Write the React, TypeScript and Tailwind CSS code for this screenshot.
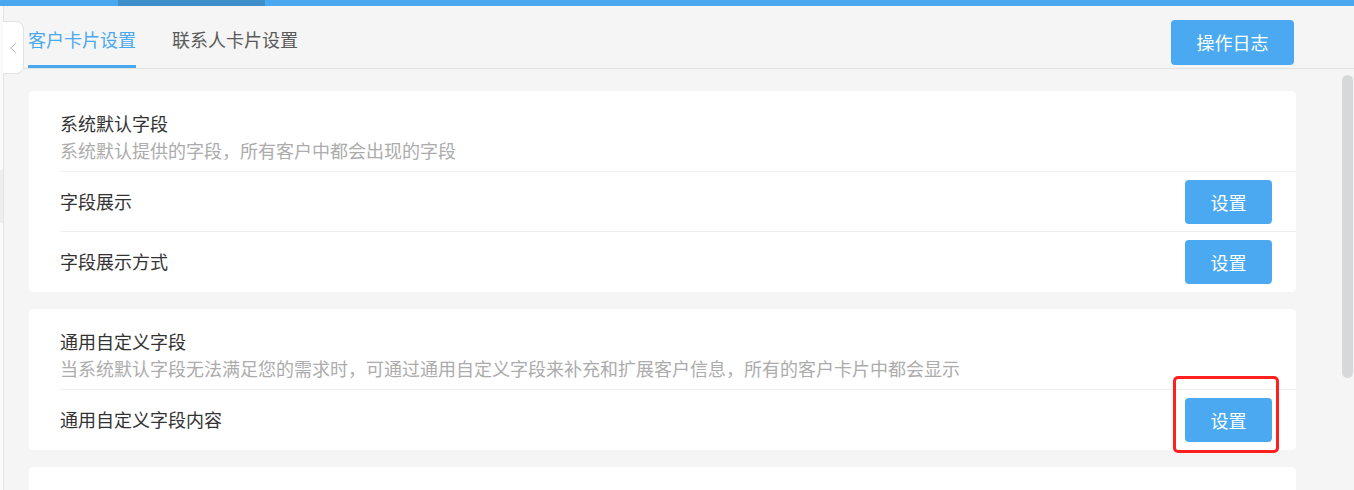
import { ChevronLeft } from "lucide-react";

const font = { fontFamily: '"Noto Sans CJK SC", "Noto Sans", sans-serif' };

function SetButton({ marked }: { marked?: boolean }) {
  return (
    <div className="relative">
      <button className="w-[87px] h-[44px] rounded-[4px] bg-[#4aa9f0] text-white text-[18px] leading-[44px]">
        设置
      </button>
      {marked && (
        <div className="absolute -left-[12px] -right-[7px] -top-[22px] -bottom-[11px] border-[3px] border-[#ff1f1f] rounded-[5px]" />
      )}
    </div>
  );
}

function Row({ label, marked }: { label: string; marked?: boolean }) {
  return (
    <div className="ml-[31px] h-[60px] border-t border-[#efefef] flex items-center justify-between pr-[24px]">
      <span className="text-[18px] text-[#333]">{label}</span>
      <SetButton marked={marked} />
    </div>
  );
}

function Card({
  title,
  desc,
  rows,
}: {
  title: string;
  desc: string;
  rows: { label: string; marked?: boolean }[];
}) {
  return (
    <div className="bg-white rounded-[4px] pb-[1px]">
      <div className="pl-[31px] pt-[19px] pb-[7px] text-[18px] leading-[27px]">
        <div className="text-[#333]">{title}</div>
        <div className="text-[#acacac]">{desc}</div>
      </div>
      {rows.map((r) => (
        <Row key={r.label} label={r.label} marked={r.marked} />
      ))}
    </div>
  );
}

export default function App() {
  return (
    <div className="w-[1354px] h-[490px] overflow-hidden bg-[#f5f5f5] relative" style={font}>
      <div className="h-[6px] bg-[#4aa8ee] flex">
        <div className="ml-[118px] w-[147px] bg-[#3f8fcb]" />
      </div>

      <div className="flex h-[484px]">
        <div className="w-[4px] border-r border-[#e3e3e3] bg-[#fafafa] flex flex-col">
          <div className="mt-[164px] h-[53px] bg-[#eeeeee]" />
        </div>

        <div className="flex-1 flex flex-col relative">
          <div className="h-[63px] border-b border-[#e2e2e2] flex justify-between pl-[24px] pr-[60px]">
            <div className="flex gap-[36px]">
              <div className="pt-[20px] pb-[12px] border-b-[3px] border-[#4aa8ee] text-[#4aa8ee] text-[18px] leading-[27px]">
                客户卡片设置
              </div>
              <div className="pt-[20px] pb-[12px] text-[#5a5a5a] text-[18px] leading-[27px]">
                联系人卡片设置
              </div>
            </div>
            <button className="mt-[14px] w-[123px] h-[45px] rounded-[4px] bg-[#4aa9f0] text-white text-[18px]">
              操作日志
            </button>
          </div>

          <div className="flex flex-col gap-[17px] pl-[25px] pr-[58px] pt-[22px]">
            <Card
              title="系统默认字段"
              desc="系统默认提供的字段，所有客户中都会出现的字段"
              rows={[{ label: "字段展示" }, { label: "字段展示方式" }]}
            />
            <Card
              title="通用自定义字段"
              desc="当系统默认字段无法满足您的需求时，可通过通用自定义字段来补充和扩展客户信息，所有的客户卡片中都会显示"
              rows={[{ label: "通用自定义字段内容", marked: true }]}
            />
            <div className="bg-white rounded-[4px] h-[80px]" />
          </div>

          <div className="absolute right-[1px] top-[69px] w-[11px] h-[303px] rounded-full bg-[#d7d8da]" />
        </div>
      </div>

      <div className="absolute left-[3px] top-[21px] w-[21px] h-[53px] bg-white border border-l-0 border-[#e3e3e3] rounded-r-[8px] flex items-center justify-center">
        <ChevronLeft size={18} strokeWidth={1.3} className="text-[#a5a5a5]" />
      </div>
    </div>
  );
}
